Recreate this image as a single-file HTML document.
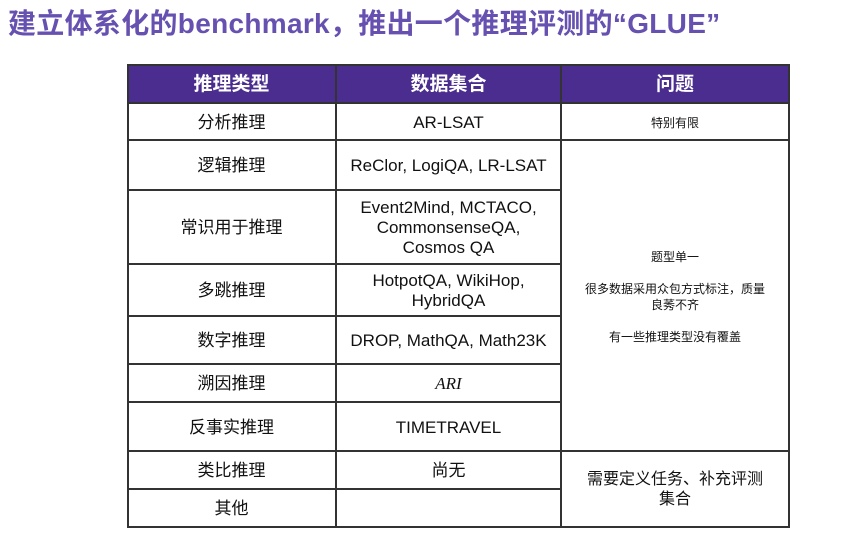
<!DOCTYPE html>
<html><head><meta charset="utf-8"><style>
body{margin:0;width:856px;height:547px;background:#fff;position:relative;overflow:hidden;font-family:"Liberation Sans","Noto Sans CJK SC",sans-serif;}
.t{position:absolute;left:8px;top:2px;font-size:28px;font-weight:bold;color:#6650b0;white-space:nowrap;letter-spacing:0.3px;}
.c{position:absolute;box-sizing:border-box;display:flex;align-items:center;justify-content:center;text-align:center;color:#111;font-size:17px;line-height:20px;padding-top:2px;}
.h{background:#4a2d8e;color:#fff;font-size:19px;font-weight:bold;}
.ln{position:absolute;background:#333;}
</style></head><body>
<div class="t">建立体系化的benchmark，推出一个推理评测的“GLUE”</div>
<div class="c h" style="left:127px;top:64px;width:209px;height:39px">推理类型</div>
<div class="c h" style="left:336px;top:64px;width:225px;height:39px">数据集合</div>
<div class="c h" style="left:561px;top:64px;width:228px;height:39px">问题</div>

<div class="c" style="left:127px;top:103px;width:209px;height:37px">分析推理</div>
<div class="c" style="left:127px;top:140px;width:209px;height:50px">逻辑推理</div>
<div class="c" style="left:127px;top:190px;width:209px;height:74px">常识用于推理</div>
<div class="c" style="left:127px;top:264px;width:209px;height:52px">多跳推理</div>
<div class="c" style="left:127px;top:316px;width:209px;height:48px">数字推理</div>
<div class="c" style="left:127px;top:364px;width:209px;height:38px">溯因推理</div>
<div class="c" style="left:127px;top:402px;width:209px;height:49px">反事实推理</div>
<div class="c" style="left:127px;top:451px;width:209px;height:38px">类比推理</div>
<div class="c" style="left:127px;top:489px;width:209px;height:38px">其他</div>

<div class="c" style="left:336px;top:103px;width:225px;height:37px">AR-LSAT</div>
<div class="c" style="left:336px;top:140px;width:225px;height:50px">ReClor, LogiQA, LR-LSAT</div>
<div class="c" style="left:336px;top:190px;width:225px;height:74px">Event2Mind, MCTACO,<br>CommonsenseQA,<br>Cosmos QA</div>
<div class="c" style="left:336px;top:264px;width:225px;height:52px">HotpotQA, WikiHop,<br>HybridQA</div>
<div class="c" style="left:336px;top:316px;width:225px;height:48px">DROP, MathQA, Math23K</div>
<div class="c" style="left:336px;top:364px;width:225px;height:38px;font-family:'Liberation Serif',serif;font-style:italic">ARI</div>
<div class="c" style="left:336px;top:402px;width:225px;height:49px">TIMETRAVEL</div>
<div class="c" style="left:336px;top:451px;width:225px;height:38px">尚无</div>

<div class="c" style="left:561px;top:103px;width:228px;height:37px;font-size:12px">特别有限</div>
<div class="c" style="left:561px;top:140px;width:228px;height:311px;font-size:12px;line-height:16px">题型单一<br><br>很多数据采用众包方式标注，质量<br>良莠不齐<br><br>有一些推理类型没有覆盖</div>
<div class="c" style="left:561px;top:451px;width:228px;height:76px;font-size:16px;line-height:20px">需要定义任务、补充评测<br>集合</div>

<div class="ln" style="left:127px;top:64px;width:663px;height:2px"></div>
<div class="ln" style="left:127px;top:64px;width:2px;height:464px"></div>
<div class="ln" style="left:788px;top:64px;width:2px;height:464px"></div>
<div class="ln" style="left:335px;top:64px;width:2px;height:464px"></div>
<div class="ln" style="left:560px;top:64px;width:2px;height:464px"></div>
<div class="ln" style="left:127px;top:526px;width:663px;height:2px"></div>
<div class="ln" style="left:127px;top:102px;width:663px;height:2px"></div>
<div class="ln" style="left:127px;top:139px;width:663px;height:2px"></div>
<div class="ln" style="left:127px;top:189px;width:434px;height:2px"></div>
<div class="ln" style="left:127px;top:263px;width:434px;height:2px"></div>
<div class="ln" style="left:127px;top:315px;width:434px;height:2px"></div>
<div class="ln" style="left:127px;top:363px;width:434px;height:2px"></div>
<div class="ln" style="left:127px;top:401px;width:434px;height:2px"></div>
<div class="ln" style="left:127px;top:450px;width:663px;height:2px"></div>
<div class="ln" style="left:127px;top:488px;width:434px;height:2px"></div>
</body></html>
